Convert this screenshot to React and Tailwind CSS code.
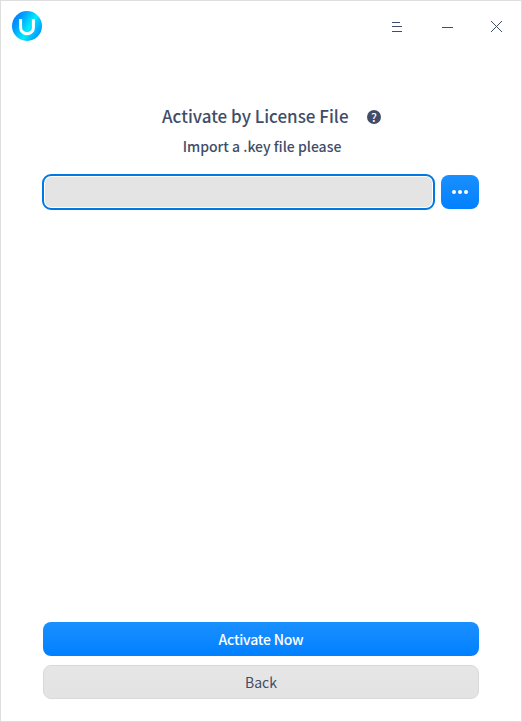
import React from "react";

function Logo() {
  return (
    <svg width="30" height="30" viewBox="0 0 30 30" aria-hidden="true">
      <defs>
        <linearGradient id="logoFill" x1="0" y1="0.2" x2="1" y2="0.8">
          <stop offset="0" stopColor="#0078ff" />
          <stop offset="0.25" stopColor="#00a0ff" />
          <stop offset="0.58" stopColor="#00ecfc" />
          <stop offset="0.82" stopColor="#00b0ff" />
          <stop offset="1" stopColor="#0090ff" />
        </linearGradient>
      </defs>
      <circle cx="15" cy="15" r="15" fill="url(#logoFill)" />
      <path d="M8.6 8v8.4a6.4 6.4 0 0 0 12.8 0V8" fill="none" stroke="#fff" strokeWidth="3" />
    </svg>
  );
}

function TitleBar() {
  return (
    <header className="flex h-[50px] shrink-0 items-start justify-between pt-[10px] pl-[11px] pr-[18px]">
      <Logo />
      <div className="flex items-center gap-[38px] pt-[9px] text-[#414d68]">
        <svg width="12" height="14" viewBox="0 0 12 14" fill="currentColor" shapeRendering="crispEdges">
          <path d="M2 2h8v1H2zM2 6h10v1H2zM2 11h10v1H2z" />
        </svg>
        <svg width="13" height="14" viewBox="0 0 13 14" fill="currentColor" shapeRendering="crispEdges">
          <path d="M2 7h11v1H2z" />
        </svg>
        <svg width="12" height="14" viewBox="0 0 12 14" fill="none" stroke="currentColor">
          <path d="M0 1l11 11M11 1L0 12" />
        </svg>
      </div>
    </header>
  );
}

export default function App() {
  return (
    <div className="flex h-[722px] w-[522px] flex-col border border-[#dedede] bg-white font-['Noto_Sans_CJK_SC',sans-serif] font-medium text-[#414d68]">
      <TitleBar />
      <main className="flex flex-1 flex-col px-[42px] pt-[52px] pb-[22px]">
        <div className="flex h-[26px] items-center pt-px pl-[119px]">
          <h1 className="w-[205px] whitespace-nowrap pb-[2px] text-[17px] leading-[24px]">Activate by License File</h1>
          <span className="flex h-[14px] w-[14px] items-center justify-center rounded-full bg-[#414d68] text-[12px] leading-[14px] font-medium text-white">
            ?
          </span>
        </div>
        <p className="mt-[6px] pl-[2px] text-center text-[14px] leading-[22px]">Import a .key file please</p>
        <div className="-ml-px mt-[17px] flex items-center gap-[6px]">
          <input
            readOnly
            aria-label="License file"
            className="h-[36px] w-[393px] rounded-[9px] border-2 border-[#0078e4] bg-[#e4e4e4] shadow-[inset_0_0_0_1px_#ffffff] outline-none"
          />
          <button aria-label="Browse" className="flex h-[34px] w-[38px] items-center justify-center rounded-[8px] bg-linear-to-b from-[#1a90ff] to-[#0080ff]">
            <svg width="16" height="4" viewBox="0 0 16 4" fill="#fff">
              <circle cx="2" cy="2" r="2" />
              <circle cx="8" cy="2" r="2" />
              <circle cx="14" cy="2" r="2" />
            </svg>
          </button>
        </div>
        <div className="mt-auto flex flex-col gap-[9px] text-[14px] leading-[20px]">
          <button className="h-[34px] rounded-[8px] bg-linear-to-b from-[#1a90ff] to-[#0080ff] tracking-[-0.2px] text-white">Activate Now</button>
          <button className="h-[34px] rounded-[8px] border border-[#d9d9d9] bg-linear-to-b from-[#e6e6e6] to-[#e3e3e3] font-normal">Back</button>
        </div>
      </main>
    </div>
  );
}
